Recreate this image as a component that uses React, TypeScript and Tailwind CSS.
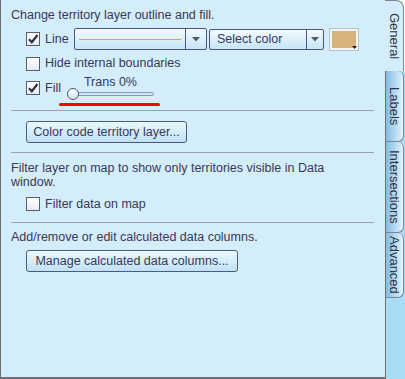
import React from 'react';

const font = { fontFamily: '"Liberation Sans", Arial, sans-serif' };

function CheckBox({ checked }: { checked?: boolean }) {
  return (
    <div className="flex h-[14px] w-[14px] shrink-0 items-center justify-center border border-[#5c5c6c] bg-gradient-to-b from-white to-[#e4ecf2]">
      {checked && (
        <svg width="12" height="12" viewBox="0 0 12 12">
          <path d="M2 6.2 L4.8 9.2 L10.5 2" fill="none" stroke="#333340" strokeWidth="2.2" />
        </svg>
      )}
    </div>
  );
}

function Arrow() {
  return (
    <svg width="8" height="5" viewBox="0 0 8 5">
      <path d="M0 0 H8 L4 4.5 Z" fill="#55596a" />
    </svg>
  );
}

function Button({ label, width }: { label: string; width: string }) {
  return (
    <div
      className={`ml-[15px] flex h-[22px] ${width} items-center justify-center rounded-[3px] border border-[#4e5a7c] bg-gradient-to-b from-[#eaf8ff] to-[#bfe2f4] text-[12.5px] text-[#383858]`}
    >
      {label}
    </div>
  );
}

export default function App() {
  return (
    <div className="flex h-[379px] w-[405px] bg-white text-[#383858]" style={font}>
      {/* Main panel */}
      <div className="flex h-[379px] w-[385px] flex-col border-b-2 border-l border-[#707070] bg-[#d3edfa] pl-[10px] pr-[11px] text-[12.5px]">
        <div className="mt-[8px] leading-[15px]">Change territory layer outline and fill.</div>

        {/* Line row */}
        <div className="mt-[5px] flex h-[22px] items-center pl-[15px]">
          <CheckBox checked />
          <span className="ml-[5px] w-[29px]">Line</span>
          <div className="flex h-[22px] w-[133px] items-center rounded-[2px] border border-[#4a5680] bg-gradient-to-b from-[#f2fbff] to-[#c6e5f6]">
            <div className="flex flex-1 items-center px-[4px]">
              <div className="h-px w-full bg-[#f0a030]" />
            </div>
            <div className="flex h-full w-[21px] items-center justify-center border-l border-[#4a5680]">
              <Arrow />
            </div>
          </div>
          <div className="ml-[2px] flex h-[21px] w-[115px] items-center rounded-[2px] border border-[#4a5680] bg-gradient-to-b from-[#f2fbff] to-[#c6e5f6]">
            <span className="flex-1 pl-[7px]">Select color</span>
            <div className="flex h-full w-[17px] items-center justify-center border-l border-[#4a5680]">
              <Arrow />
            </div>
          </div>
          <div className="relative ml-[5px] h-[23px] w-[30px] border border-[#b8c4cc] bg-[#f4f4f4] p-[2px]">
            <div className="h-full w-full bg-[#d8b27a]" />
            <svg className="absolute bottom-[1px] right-[1px]" width="5" height="3" viewBox="0 0 5 3">
              <path d="M0 0 H5 L2.5 3 Z" fill="#222" />
            </svg>
          </div>
        </div>

        {/* Hide row */}
        <div className="mt-[2px] flex h-[23px] items-center pl-[15px]">
          <CheckBox />
          <span className="ml-[5px]">Hide internal boundaries</span>
        </div>

        {/* Fill row */}
        <div className="flex h-[26px] items-center pl-[15px]">
          <CheckBox checked />
          <span className="ml-[5px]">Fill</span>
          <div className="ml-[6px] flex w-[87px] flex-col items-center">
            <span className="leading-[12px]">Trans 0%</span>
            <div className="relative h-[12px] w-full">
              <div className="absolute left-[2px] right-0 top-[4px] h-[4px] rounded-full border border-[#8a9ab4] bg-[#cde8f6]" />
              <div className="absolute left-0 top-0 h-[12px] w-[12px] rounded-full border border-[#4a5472] bg-gradient-to-b from-white to-[#cfe6f3]" />
            </div>
          </div>
        </div>
        <div className="ml-[48px] mt-[2px] h-[3px] w-[101px] rounded-full bg-[#ff0000]" />

        <div className="mt-[4px] h-px bg-[#9aa3ab]" />
        <div className="mt-[10px]">
          <Button label="Color code territory layer..." width="w-[161px]" />
        </div>

        <div className="mt-[9px] h-px bg-[#9aa3ab]" />
        <div className="mt-[8px] leading-[14px]">
          Filter layer on map to show only territories visible in Data
          <br />
          window.
        </div>
        <div className="mt-[4px] flex h-[22px] items-center pl-[15px]">
          <CheckBox />
          <span className="ml-[5px]">Filter data on map</span>
        </div>

        <div className="mt-[7px] h-px bg-[#9aa3ab]" />
        <div className="mt-[7px] leading-[14px]">Add/remove or edit calculated data columns.</div>
        <div className="mt-[6px]">
          <Button label="Manage calculated data columns..." width="w-[212px]" />
        </div>
      </div>

      {/* Tabs */}
      <div className="flex w-[20px] flex-col">
        <div className="flex h-[71px] w-[19px] items-center justify-center rounded-tr-[8px] border-r border-t border-[#808890] bg-[#d3edfa]">
          <span className="text-[13px] text-[#333344] [writing-mode:vertical-rl]">General</span>
        </div>
        <div className="flex flex-1 flex-col border-l border-[#707070] bg-[#a9dcf5]">
          <div className="flex h-[71px] w-[18px] items-center justify-center rounded-r-[6px] border-b border-r border-[#7c8690] bg-gradient-to-r from-[#80bde4] to-[#e2f3fb]">
            <span className="text-[13px] text-[#333344] [writing-mode:vertical-rl]">Labels</span>
          </div>
          <div className="flex h-[91px] w-[18px] items-center justify-center rounded-r-[6px] border-b border-r border-[#7c8690] bg-gradient-to-r from-[#80bde4] to-[#e2f3fb]">
            <span className="text-[13px] text-[#333344] [writing-mode:vertical-rl]">Intersections</span>
          </div>
          <div className="flex h-[65px] w-[18px] items-center justify-center rounded-r-[6px] border-b border-r border-[#7c8690] bg-gradient-to-r from-[#80bde4] to-[#e2f3fb]">
            <span className="text-[13px] text-[#333344] [writing-mode:vertical-rl]">Advanced</span>
          </div>
        </div>
      </div>
    </div>
  );
}
